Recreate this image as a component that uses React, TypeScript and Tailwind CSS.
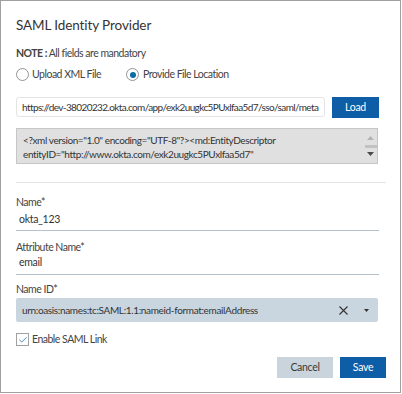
import React from 'react';
import { Check } from 'lucide-react';

const font = { fontFamily: 'Lato, "Liberation Sans", sans-serif' };

const App: React.FC = () => {
  return (
    <div className="w-[402px] h-[394px] bg-white" style={font}>
      <div className="w-[401px] h-[393px] border border-[#a0a0a0] pl-[15px] pt-[16px] text-[#3d3d3d]">
        <h1 className="h-[16px] text-[13.5px] leading-[16px] text-[#333] tracking-[-0.1px]">SAML Identity Provider</h1>

        <p className="mt-[13px] h-[14px] text-[10.5px] leading-[14px] text-[#444] tracking-[-0.5px]">
          <span className="font-bold">NOTE :</span> All fields are mandatory
        </p>

        <div className="mt-[8px] h-[13px] flex items-center text-[10.5px] leading-[13px] text-[#444] tracking-[-0.5px]">
          <div className="w-[110px] flex items-center">
            <span className="shrink-0 w-[13px] h-[13px] rounded-full border border-[#949494] bg-white" />
            <span className="ml-[3px]">Upload XML File</span>
          </div>
          <span className="shrink-0 w-[13px] h-[13px] rounded-full border border-[#949494] bg-white flex items-center justify-center">
            <span className="w-[6px] h-[6px] rounded-full bg-[#0c6aa6]" />
          </span>
          <span className="ml-[4px]">Provide File Location</span>
        </div>

        <div className="mt-[16px] h-[21px] flex items-start">
          <div className="shrink-0 w-[309px] h-[20px] border border-[#e4e4e4] rounded-[3px] px-[5px] flex items-center text-[10px] text-[#333] tracking-[-0.6px] overflow-hidden whitespace-nowrap">
            https://dev-38020232.okta.com/app/exk2uugkc5PUxlfaa5d7/sso/saml/meta
          </div>
          <button className="shrink-0 ml-[7px] w-[47px] h-[21px] bg-[#0d5ea7] text-white text-[10.5px] tracking-[-0.3px]">Load</button>
        </div>

        <div className="mt-[10px] w-[362px] h-[36px] border border-[#c6c6c6] bg-[#e0e0e0] flex overflow-hidden">
          <div className="flex-1 pl-[6px] pt-[4px] text-[10px] leading-[14px] text-[#333] tracking-[-0.4px] whitespace-nowrap overflow-hidden">
            <div>&lt;?xml version="1.0" encoding="UTF-8"?&gt;&lt;md:EntityDescriptor</div>
            <div>entityID="http://www.okta.com/exk2uugkc5PUxlfaa5d7"</div>
            <div>xmlns:md="urn:oasis:names:tc:SAML:2.0:metadata"&gt;&lt;md:IDPSSODescriptor</div>
          </div>
          <div className="shrink-0 w-[13px] flex flex-col items-center pt-[7px]">
            <svg width="7" height="4" viewBox="0 0 7 4"><path d="M0 4 L3.5 0 L7 4 Z" fill="#b5b5b5" /></svg>
            <div className="mt-[5px] w-[12px] h-[3px] bg-[#c2c2c2]" />
            <svg className="mt-[4px]" width="7" height="4" viewBox="0 0 7 4"><path d="M0 0 L7 0 L3.5 4 Z" fill="#4a4a4a" /></svg>
          </div>
        </div>

        <div className="mt-[18px] w-[370px] h-px bg-[#e4e4e4]" />

        <div className="mt-[12px] w-[363px]">
          <div className="h-[14px] text-[10.5px] leading-[14px] text-[#444] tracking-[-0.5px]">Name*</div>
          <div className="h-[22px] px-[3px] flex items-center text-[10.5px] text-[#333] tracking-[-0.3px] border-b border-[#b5c3ce]">okta_123</div>
        </div>

        <div className="mt-[9px] w-[363px]">
          <div className="h-[14px] text-[10.5px] leading-[14px] text-[#444] tracking-[-0.5px]">Attribute Name*</div>
          <div className="h-[21px] px-[3px] pb-[2px] flex items-center text-[10.5px] text-[#333] tracking-[-0.3px] border-b border-[#b5c3ce]">email</div>
        </div>

        <div className="mt-[7px] w-[362px]">
          <div className="h-[14px] text-[10.5px] leading-[14px] text-[#444] tracking-[-0.5px]">Name ID*</div>
          <div className="mt-[2px] h-[24px] rounded-[2px] bg-[#cad6df] pl-[6px] pr-[9px] flex items-center text-[10px] text-[#333] tracking-[-0.35px]">
            <span className="flex-1 whitespace-nowrap">urn:oasis:names:tc:SAML:1.1:nameid-format:emailAddress</span>
            <svg width="9" height="9" viewBox="0 0 9 9"><path d="M0.5 0.5 L8.5 8.5 M8.5 0.5 L0.5 8.5" stroke="#333" strokeWidth="1.1" /></svg>
            <svg className="ml-[16px]" width="5" height="3" viewBox="0 0 5 3"><path d="M0 0 L5 0 L2.5 3 Z" fill="#333" /></svg>
          </div>
        </div>

        <div className="mt-[11px] h-[13px] flex items-center text-[10.5px] text-[#444] tracking-[-0.5px]">
          <span className="shrink-0 w-[13px] h-[13px] border border-[#a0a0a0] bg-white flex items-center justify-center">
            <Check size={10} strokeWidth={2} className="text-[#2f74b5]" />
          </span>
          <span className="ml-[3px]">Enable SAML Link</span>
        </div>

        <div className="mt-[11px] w-[370px] flex justify-end gap-[7px]">
          <button className="w-[56px] h-[21px] bg-[#c9d4dc] text-[#3a3a3a] text-[10.5px] tracking-[-0.3px]">Cancel</button>
          <button className="w-[46px] h-[21px] bg-[#0d5ea7] text-white text-[10.5px] tracking-[-0.3px]">Save</button>
        </div>
      </div>
    </div>
  );
};

export default App;
